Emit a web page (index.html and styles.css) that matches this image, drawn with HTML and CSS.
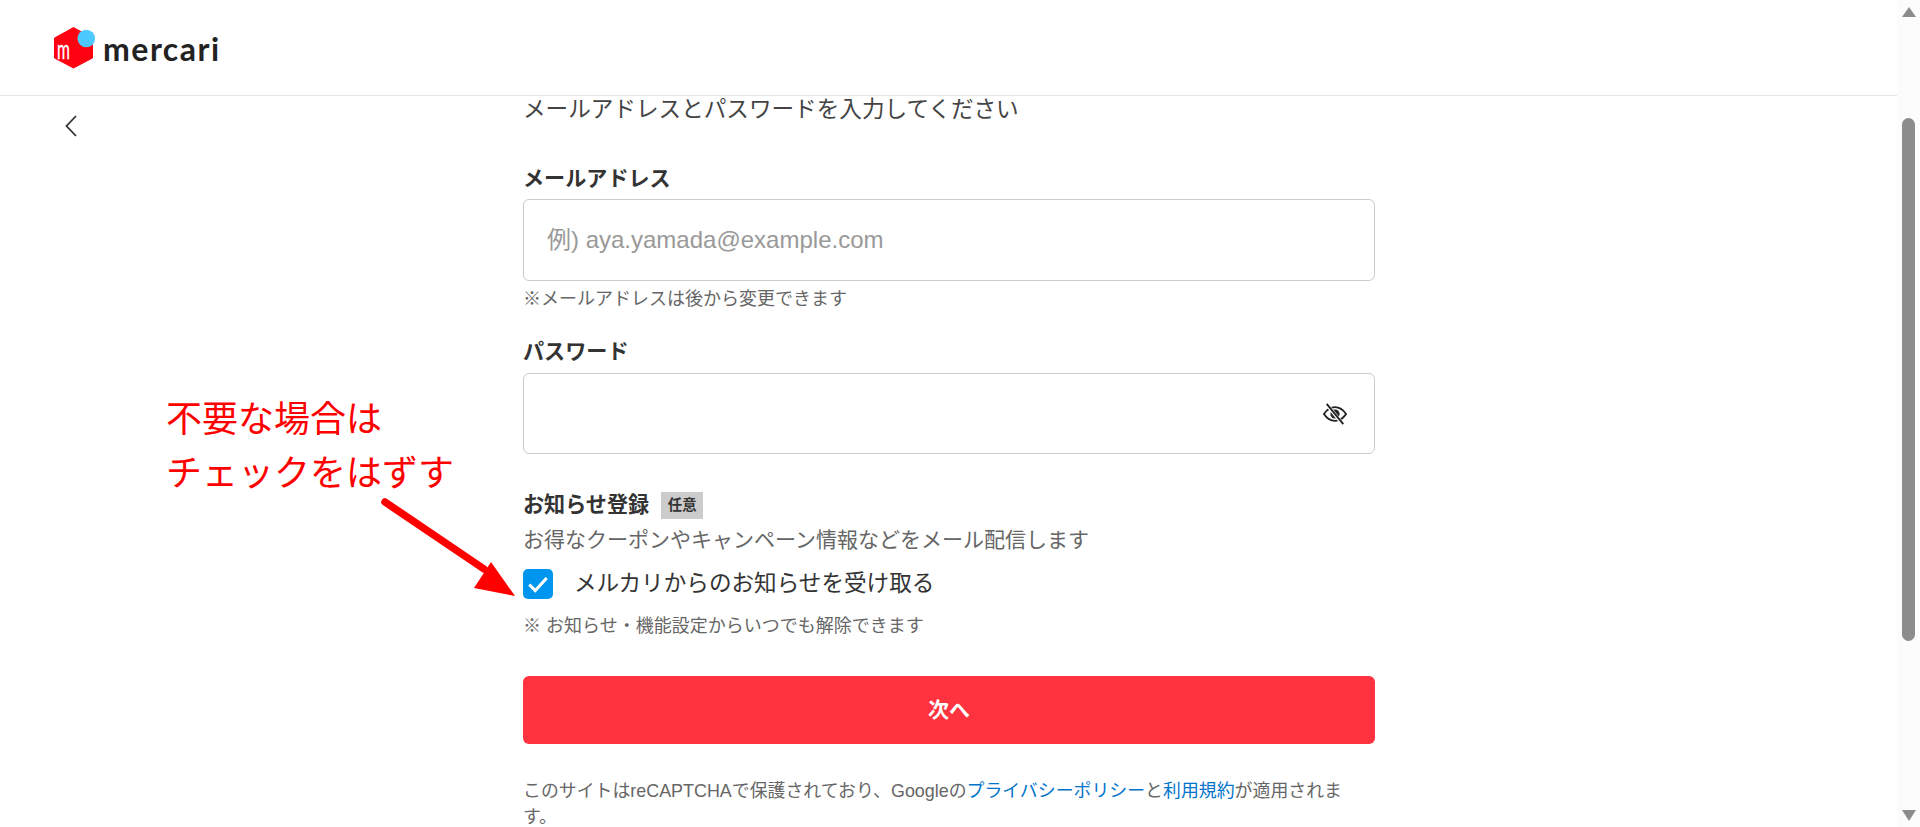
FILE: index.html
```html
<!DOCTYPE html>
<html lang="ja">
<head>
<meta charset="utf-8">
<title>mercari</title>
<link rel="stylesheet" href="styles.css">
</head>
<body>
<div class="page">
  <header class="header">
    <svg class="logo-mark" width="42" height="44" viewBox="0 0 42 44" aria-hidden="true">
      <path d="M19.5 1.5 L38.5 12 V32 L19.5 42 L0.5 32 V12 Z" fill="#ff0211" stroke="#ff0211" stroke-width="1" stroke-linejoin="round"/>
      <circle cx="32.3" cy="12.5" r="8.8" fill="#4dc9ff"/>
      <text class="logo-m" transform="translate(3 33) scale(.58 1)">m</text>
    </svg>
    <span class="wordmark">mercari</span>
  </header>
  <main class="content">
    <div class="back-col">
      <svg width="14" height="24" viewBox="0 0 14 24" aria-hidden="true"><path d="M12 2 L2.5 12 L12 22" fill="none" stroke="#333" stroke-width="1.8"/></svg>
    </div>
    <form class="form">
      <p class="intro">メールアドレスとパスワードを入力してください</p>
      <label class="label label-email">メールアドレス</label>
      <input class="field" type="text" placeholder="例) aya.yamada@example.com">
      <p class="hint">※メールアドレスは後から変更できます</p>
      <label class="label label-pass">パスワード</label>
      <div class="field pass-field">
        <svg width="26" height="24" viewBox="0 0 28 26" aria-hidden="true">
          <path d="M2 13 C6 7 10 5.5 14 5.5 C18 5.5 22 7 26 13 C22 19 18 20.5 14 20.5 C10 20.5 6 19 2 13 Z" fill="none" stroke="#222" stroke-width="2"/>
          <circle cx="14" cy="13" r="5" fill="#222"/>
          <path d="M5 2.5 L22 23.5" stroke="#fff" stroke-width="4"/>
          <path d="M5 2 L23 24" stroke="#222" stroke-width="2"/>
        </svg>
      </div>
      <div class="news-head">
        <span class="news-title">お知らせ登録</span>
        <span class="badge">任意</span>
      </div>
      <p class="desc">お得なクーポンやキャンペーン情報などをメール配信します</p>
      <div class="check-row">
        <span class="checkbox">
          <svg width="24" height="20" viewBox="0 0 22 18" aria-hidden="true"><path d="M3 9.5 L8.5 15 L19 3.5" fill="none" stroke="#fff" stroke-width="2.8"/></svg>
        </span>
        <span class="check-label">メルカリからのお知らせを受け取る</span>
      </div>
      <p class="note">※ お知らせ・機能設定からいつでも解除できます</p>
      <button class="submit" type="button">次へ</button>
      <p class="legal">このサイトはreCAPTCHAで保護されており、Googleの<a href="#">プライバシーポリシー</a>と<a href="#">利用規約</a>が適用されま<br>す。</p>
    </form>
  </main>
  <div class="callout">不要な場合は<br>チェックをはずす</div>
  <svg class="arrow" width="150" height="100" viewBox="0 0 150 100" aria-hidden="true">
    <path d="M6 5 L105 72" stroke="#ff0000" stroke-width="7.5" stroke-linecap="round"/>
    <path d="M112 65 L95 91 L136 99 Z" fill="#ff0000"/>
  </svg>
</div>
<aside class="scrollbar" aria-hidden="true">
  <span class="sb-up"></span>
  <span class="sb-thumb"></span>
  <span class="sb-down"></span>
</aside>
</body>
</html>
```
FILE: styles.css
```css
* { box-sizing: border-box; }
html, body { height: 100%; }
body {
  margin: 0;
  display: flex;
  height: 827px;
  overflow: hidden;
  background: #fff;
  color: #333;
  font-family: "Liberation Sans", "Noto Sans CJK JP", sans-serif;
}
p { margin: 0; }

.page { flex: 1; min-width: 0; position: relative; }

.header {
  height: 96px;
  border-bottom: 1px solid #e5e5e5;
  display: flex;
  align-items: flex-start;
  padding: 26px 0 0 54px;
}
.logo-mark { flex: none; }
.logo-m { font-family: "Lato", sans-serif; font-weight: 400; font-size: 27px; fill: #fff; stroke: #fff; stroke-width: .4px; }
.wordmark {
  margin: 0 0 0 7px;
  font-family: "Lato", sans-serif;
  font-weight: 700;
  font-size: 32px;
  line-height: 46px;
  letter-spacing: 1.5px;
  color: #222;
}

.content {
  display: grid;
  grid-template-columns: 523px 852px 1fr;
}
.back-col { padding: 18px 0 0 64px; }
.form { grid-column: 2; display: flex; flex-direction: column; align-items: stretch; }

.intro { font-size: 22.6px; line-height: 24px; margin-top: 2px; color: #444; }
.label { font-size: 21.1px; font-weight: 700; line-height: 30px; color: #333; }
.label-email { margin-top: 42px; }
.label-pass { margin-top: 24px; }

.field {
  height: 82px;
  margin-top: 5px;
  width: 100%;
  border: 1px solid #ccc;
  border-radius: 6px;
  background: #fff;
  padding: 0 23px;
  font-family: inherit;
  font-size: 24px;
  color: #333;
}
.field::placeholder { color: #999; opacity: 1; }
.pass-field {
  height: 81px;
  margin-top: 6px;
  display: flex;
  align-items: center;
  justify-content: flex-end;
  padding: 0 26px 0 0;
}

.hint { margin-top: 5px; font-size: 18px; line-height: 27px; color: #666; }

.news-head { display: flex; align-items: center; margin-top: 37px; height: 28px; }
.news-title { font-size: 21.1px; font-weight: 700; line-height: 28px; color: #333; }
.badge {
  margin-left: 12px;
  width: 42px;
  height: 27px;
  background: #ccc;
  font-size: 14.4px;
  font-weight: 700;
  line-height: 27px;
  text-align: center;
  color: #333;
}
.desc { margin-top: 5px; font-size: 21px; line-height: 31px; color: #666; }

.check-row { display: flex; align-items: center; margin-top: 14px; height: 30px; }
.checkbox {
  width: 30px;
  height: 30px;
  border-radius: 5px;
  background: #0095ee;
  display: flex;
  align-items: center;
  justify-content: center;
}
.check-label { margin-left: 21px; font-size: 22.6px; line-height: 30px; color: #333; }

.note { margin-top: 14px; font-size: 18px; line-height: 27px; color: #666; }

.submit {
  margin-top: 36px;
  height: 68px;
  padding: 0 0 4px;
  border: 0;
  border-radius: 6px;
  background: #ff333f;
  color: #fff;
  font-family: inherit;
  font-size: 21px;
  font-weight: 700;
}

.legal { margin-top: 34px; font-size: 17.9px; line-height: 26px; color: #666; }
.legal a { color: #0073cc; text-decoration: none; }

.callout {
  position: absolute;
  left: 166px;
  top: 389px;
  font-family: "Noto Sans CJK JP", sans-serif;
  font-size: 36px;
  line-height: 54px;
  color: #ff0000;
}
.arrow { position: absolute; left: 379px; top: 497px; }

.scrollbar {
  flex: none;
  width: 23px;
  background: #fcfcfc;
  display: flex;
  flex-direction: column;
  align-items: center;
  padding-top: 7px;
}
.sb-up, .sb-down { width: 0; height: 0; border-left: 7.5px solid transparent; border-right: 7.5px solid transparent; }
.sb-up { border-bottom: 10px solid #8c8c8c; }
.sb-thumb { width: 13px; height: 523px; margin-top: 101px; border-radius: 7px; background: #8c8c8c; }
.sb-down { margin-top: 169px; border-top: 11px solid #8c8c8c; }
```
